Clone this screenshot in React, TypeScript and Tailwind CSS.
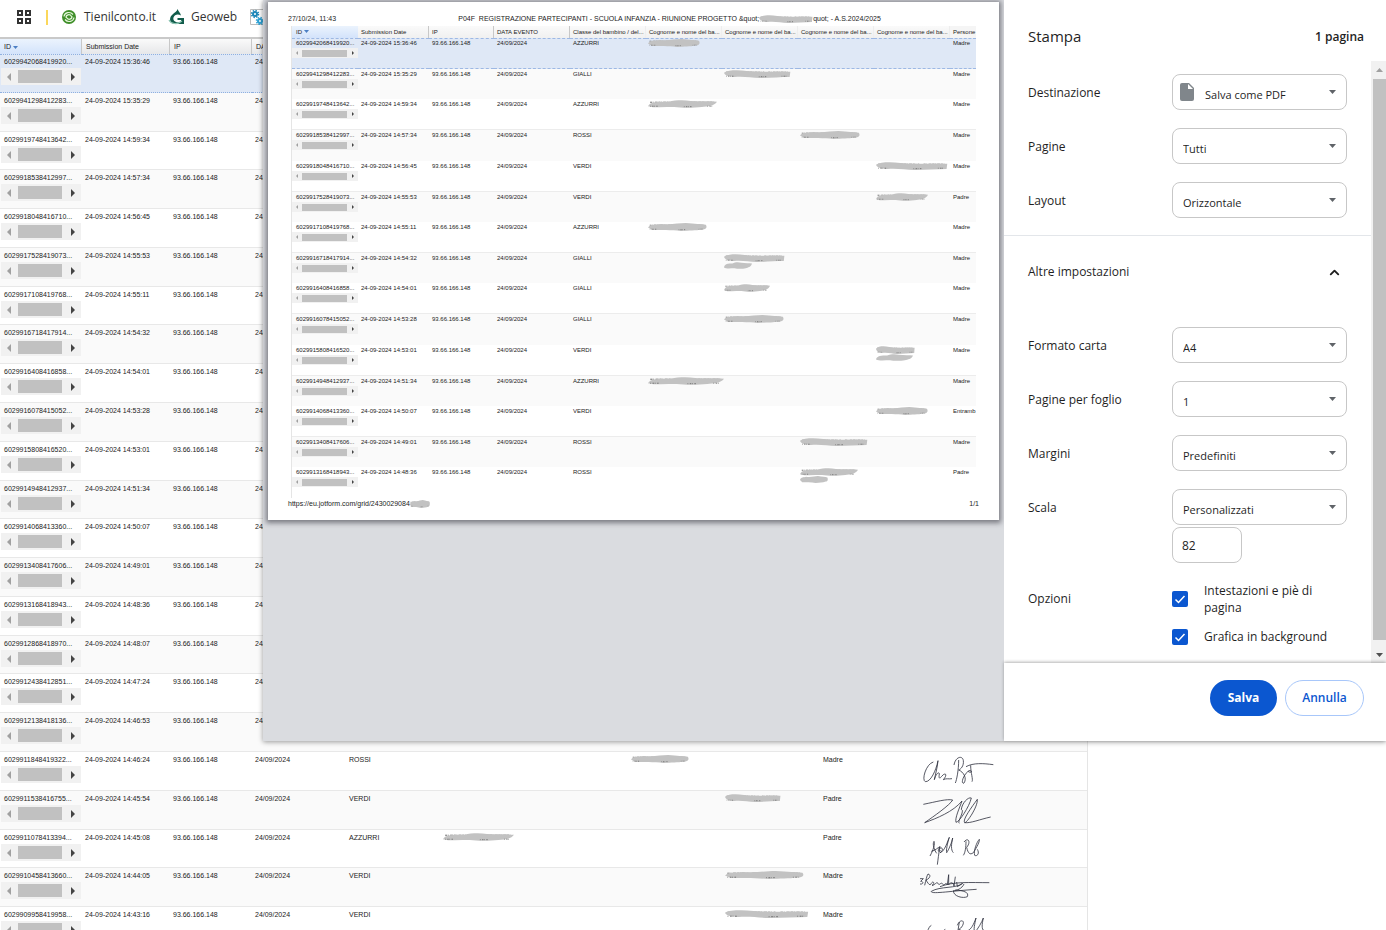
import React from 'react'
import { ChevronUp } from 'lucide-react'

type Blob = { col: number, w: number, second?: number }
type Entry = { id: string, time: string, group: string, blob?: Blob, who?: string }

const entries: Entry[] = [
    { id: '6029942068419920', time: '15:36:46', group: 'AZZURRI', blob: { col: 0, w: 52 }, who: 'Madre' },
    { id: '6029941298412283', time: '15:35:29', group: 'GIALLI', blob: { col: 1, w: 67 }, who: 'Madre' },
    { id: '6029919748413642', time: '14:59:34', group: 'AZZURRI', blob: { col: 0, w: 69 }, who: 'Madre' },
    { id: '6029918538412997', time: '14:57:34', group: 'ROSSI', blob: { col: 2, w: 60 }, who: 'Madre' },
    { id: '6029918048416710', time: '14:56:45', group: 'VERDI', blob: { col: 3, w: 72 }, who: 'Madre' },
    { id: '6029917528419073', time: '14:55:53', group: 'VERDI', blob: { col: 3, w: 52 }, who: 'Padre' },
    { id: '6029917108419768', time: '14:55:11', group: 'AZZURRI', blob: { col: 0, w: 59 }, who: 'Madre' },
    { id: '6029916718417914', time: '14:54:32', group: 'GIALLI', blob: { col: 1, w: 61, second: 28 }, who: 'Madre' },
    { id: '6029916408416858', time: '14:54:01', group: 'GIALLI', blob: { col: 1, w: 46 }, who: 'Madre' },
    { id: '6029916078415052', time: '14:53:28', group: 'GIALLI', blob: { col: 1, w: 60 }, who: 'Madre' },
    { id: '6029915808416520', time: '14:53:01', group: 'VERDI', blob: { col: 3, w: 39, second: 37 }, who: 'Madre' },
    { id: '6029914948412937', time: '14:51:34', group: 'AZZURRI', blob: { col: 0, w: 76 }, who: 'Madre' },
    { id: '6029914068413360', time: '14:50:07', group: 'VERDI', blob: { col: 3, w: 52 }, who: 'Entramb' },
    { id: '6029913408417606', time: '14:49:01', group: 'ROSSI', blob: { col: 2, w: 68 }, who: 'Madre' },
    { id: '6029913168418943', time: '14:48:36', group: 'ROSSI', blob: { col: 2, w: 58, second: 28 }, who: 'Padre' },
    { id: '6029912868418970', time: '14:48:07', group: '' },
    { id: '6029912438412851', time: '14:47:24', group: '' },
    { id: '6029912138418136', time: '14:46:53', group: '' },
    { id: '6029911848419322', time: '14:46:24', group: 'ROSSI', blob: { col: 2, w: 58 }, who: 'Madre' },
    { id: '6029911538416755', time: '14:45:54', group: 'VERDI', blob: { col: 3, w: 56 }, who: 'Padre' },
    { id: '6029911078413394', time: '14:45:08', group: 'AZZURRI', blob: { col: 0, w: 71 }, who: 'Padre' },
    { id: '6029910458413660', time: '14:44:05', group: 'VERDI', blob: { col: 3, w: 79 }, who: 'Madre' },
    { id: '6029909958419958', time: '14:43:16', group: 'VERDI', blob: { col: 3, w: 84 }, who: 'Madre' },
]

// rows before this one lie behind the print dialog
const firstOpenRow = 18

const blobShapes = [
    'M0 5 C4 1 12 2 22 1 C40 2 52 0 64 0 C80 1 90 1 98 2 C101 5 98 8 92 7 C80 9 70 8 56 9 C40 8 20 8 8 8 Z',
    'M0 3 C6 0 20 0 34 1 C48 2 60 2 76 2 C84 1 92 2 99 2 L98 8 C84 8 70 9 54 9 C40 9 30 7 16 8 C8 7 2 7 0 3 Z',
    'M0 7 C3 2 14 2 30 2 C40 0 52 0 62 1 C76 2 90 1 100 2 C96 7 86 7 78 8 C66 9 48 9 38 8 C24 8 8 9 0 7 Z',
]

const signatures: Record<number, { box: string, d: string }> = {
    18: {
        box: '951 42 510 105',
        d: 'M1000 66 C978 72 964 120 976 125 C992 126 1008 92 1014 62 C1012 84 1006 104 1003 119 C1008 100 1018 94 1018 102 C1016 114 1018 118 1024 110 L1030 104 C1040 98 1040 108 1030 119 C1040 114 1046 118 1056 116 M1076 60 C1076 90 1070 120 1066 129 M1062 75 C1066 50 1088 45 1090 62 C1092 78 1082 88 1076 90 C1090 95 1102 115 1092 129 C1084 134 1084 112 1106 92 C1120 90 1114 102 1104 94 M1112 76 C1112 100 1120 118 1116 125 M1098 80 C1120 68 1150 70 1180 74',
    },
    19: {
        box: '951 159 510 105',
        d: 'M970 193 C1010 185 1040 176 1058 180 C1050 195 1000 230 974 248 C1010 235 1060 215 1086 183 C1078 205 1064 235 1068 247 C1078 246 1108 200 1114 174 C1104 170 1086 190 1084 208 C1096 212 1070 246 1078 250 M1132 178 C1116 200 1086 240 1094 248 C1100 250 1134 200 1132 178 M1094 248 C1112 250 1140 238 1172 231',
    },
    20: {
        box: '951 276 510 105',
        d: 'M990 348 C1000 330 1006 310 1002 304 C996 312 1004 332 1010 340 M994 334 C1006 332 1014 322 1020 320 C1012 330 1014 340 1022 330 M1020 320 C1016 340 1014 360 1012 374 M1018 326 C1030 318 1030 334 1020 338 C1034 336 1044 300 1048 292 C1042 310 1038 330 1040 338 C1046 330 1056 306 1058 294 C1054 312 1052 330 1060 338 M1098 304 C1098 320 1096 338 1090 346 M1092 306 C1104 290 1114 306 1100 322 C1104 340 1110 346 1120 338 C1130 322 1140 304 1138 298 C1130 306 1120 334 1124 346 C1130 350 1140 342 1132 328',
    },
    21: {
        box: '951 390 510 105',
        d: 'M960 416 L970 416 L962 424 C972 424 970 434 960 432 M974 436 C978 420 980 408 984 402 C994 404 990 416 978 420 C984 430 990 440 994 430 C1000 420 1006 432 996 436 C1006 436 1008 424 1014 430 C1018 440 1022 424 1028 432 C1034 440 1036 424 1042 434 L1046 404 L1046 434 C1054 424 1060 428 1062 438 L1066 410 M1070 426 L1072 440 L1088 430 M1020 440 C1060 424 1110 428 1168 428 M1088 430 C1070 446 1020 438 994 454 C990 464 1060 452 1130 448 M1092 432 C1086 446 1070 452 1060 452 C1060 470 1090 476 1102 470 C1108 456 1090 452 1066 450',
    },
    22: {
        box: '951 507 510 105',
        d: 'M994 556 C986 558 974 590 986 596 C998 584 1004 576 1010 582 C1016 590 1024 574 1036 568 M1078 546 L1070 596 M1072 556 C1080 536 1096 540 1088 556 C1084 564 1080 566 1076 568 C1086 570 1094 584 1104 572 C1114 566 1120 556 1128 534 C1124 552 1120 570 1124 578 C1134 566 1146 546 1150 534 C1146 552 1144 568 1152 572',
    },
}

function Scribble({ blob, index }: { blob: Blob, index: number }) {
    return (
        <div aria-hidden="true">
            <svg className="block" width={blob.w} height="8" viewBox="0 0 100 9" preserveAspectRatio="none">
                <path d="M3 2.500 H60 M66 2.500 H95" stroke="#444" strokeWidth="1" strokeDasharray="3 1 1 2 4 1" />
                <path d={blobShapes[index % 3]} fill="#c2c2c2" />
                <path d="M3 7 H14 M52 7.500 H64 M86 7 H94" stroke="#666" strokeWidth="1" strokeDasharray="1 2 2 1" />
            </svg>
            {blob.second ? (
                <svg className="block" width={blob.second} height="7" viewBox="0 0 100 9" preserveAspectRatio="none">
                    <path d={blobShapes[(index + 1) % 3]} fill="#c2c2c2" />
                </svg>
            ) : null}
        </div>
    )
}

function SortArrow() {
    return (
        <svg className="inline-block" width="5" height="3" viewBox="0 0 5 3">
            <path d="M0 0h5L2.500 3z" fill="#4b7fc4" />
        </svg>
    )
}

function CellScroller({ small }: { small?: boolean }) {
    return (
        <div className={small ? 'flex h-[10px] items-center bg-[#f1f1f1] px-1' : 'mt-px mr-px ml-px flex h-[17px] items-center bg-[#f1f1f1] px-[6px]'}>
            <svg width={small ? 2 : 4} height={small ? 4 : 8} viewBox="0 0 4 8"><path d="M4 0v8L0 4z" fill="#a0a0a0" /></svg>
            <div className={small ? 'mx-1 h-[7px] w-[45px] bg-[#c1c1c1]' : 'mx-[7px] h-[13px] w-[44px] bg-[#c1c1c1]'} />
            <svg className="ml-auto" width={small ? 2 : 4} height={small ? 4 : 8} viewBox="0 0 4 8"><path d="M0 0v8l4-4z" fill="#444" /></svg>
        </div>
    )
}

function GridPage() {
    const head = 'h-[15px] border-r border-[#c8c8c8] bg-gradient-to-b from-[#fafafa] to-[#e6e7e9] pl-1 text-left font-normal whitespace-nowrap'
    return (
        <table className="w-[1088px] table-fixed border-separate border-spacing-0 border-r border-[#e5e5e5] text-[7px] leading-[11px] text-[#222]">
            <colgroup>
                <col className="w-[82px]" />
                <col className="w-[88px]" />
                <col className="w-[82px]" />
                <col className="w-[94px]" />
                <col className="w-[95px]" />
                <col className="w-[94px]" />
                <col className="w-[94px]" />
                <col className="w-[94px]" />
                <col className="w-[97px]" />
                <col className="w-[97px]" />
                <col />
            </colgroup>
            <thead>
                <tr>
                    <th className="h-[15px] border-r border-[#c8c8c8] bg-gradient-to-b from-[#ebf3fd] to-[#d3e3fb] pl-1 text-left font-normal">ID <SortArrow /></th>
                    <th className={head}>Submission Date</th>
                    <th className={head}>IP</th>
                    <th className={head}>DATA EVENTO</th>
                    <th className={head} colSpan={7} />
                </tr>
            </thead>
            <tbody className="align-top">
                {entries.map((e, i) => {
                    const open = i >= firstOpenRow
                    const height = i % 9 === 2 || i % 9 === 6 ? 'h-[38px]' : 'h-[39px]'
                    const tone = i === 0 ? 'border-y border-dotted border-[#8fb0e0] bg-[#dfe8f6] pt-px' : i % 2 ? 'border-b border-[#e8e8e8] bg-[#fafafa] pt-[2px]' : 'border-b border-[#e8e8e8] bg-white pt-[2px]'
                    const cell = height + ' ' + tone + ' pl-[3px]'
                    return (
                        <tr key={e.id}>
                            <td className={height + ' ' + tone}>
                                <div className="pl-1 whitespace-nowrap">{e.id}...</div>
                                <CellScroller />
                            </td>
                            <td className={cell}>24-09-2024 {e.time}</td>
                            <td className={cell}>93.66.166.148</td>
                            <td className={cell}>24/09/2024</td>
                            <td className={cell}>{open ? e.group : null}</td>
                            {[0, 1, 2, 3].map(c => (
                                <td key={c} className={height + ' ' + tone + ' pl-[2px]'}>
                                    {open && e.blob && e.blob.col === c ? <div className="pt-px"><Scribble blob={e.blob} index={i} /></div> : null}
                                </td>
                            ))}
                            <td className={cell}>{open ? e.who : null}</td>
                            <td className={height + ' ' + tone}>
                                {signatures[i] ? (
                                    <svg className="block h-[35px] w-[170px]" viewBox={signatures[i].box} preserveAspectRatio="xMinYMin meet" role="img" aria-label="Firma">
                                        <path d={signatures[i].d} fill="none" stroke="#2c2f3c" strokeWidth="2.400" />
                                    </svg>
                                ) : null}
                            </td>
                        </tr>
                    )
                })}
            </tbody>
        </table>
    )
}

function PrintSheet() {
    const head = 'h-3 border-r bg-gradient-to-b from-[#fafafa] to-[#f0f0f0] pl-[3px] text-left font-normal whitespace-nowrap'
    const names = 'Cognome e nome del ba...'
    return (
        <div className="mx-[5px] mt-[2px] bg-white px-5 pt-[11px] pb-[11px] text-[#222] shadow-[0_1px_5px_2px_rgba(70,70,80,0.65)]">
            <div className="flex h-3 items-center text-[7px] leading-[10px]">
                <span>27/10/24, 11:43</span>
                <div className="flex flex-1 items-center justify-center pl-6 whitespace-pre">
                    <span>P04F  REGISTRAZIONE PARTECIPANTI - SCUOLA INFANZIA - RIUNIONE PROGETTO &amp;quot;</span>
                    <Scribble blob={{ col: 0, w: 54 }} index={1} />
                    <span>quot; - A.S.2024/2025</span>
                </div>
            </div>
            <div className="mr-[3px] ml-[3px] border-l border-[#e5e5e5]">
                <table className="mt-px w-full table-fixed border-separate border-spacing-0 text-[6px] leading-[9px]">
                    <colgroup>
                        <col className="w-[66px]" />
                        <col className="w-[71px]" />
                        <col className="w-[65px]" />
                        <col className="w-[76px]" />
                        <col className="w-[76px]" />
                        <col className="w-[76px]" />
                        <col className="w-[76px]" />
                        <col className="w-[76px]" />
                        <col className="w-[76px]" />
                        <col />
                    </colgroup>
                    <thead>
                        <tr>
                            <th className="h-3 bg-gradient-to-b from-[#ebf3fd] to-[#d3e3fb] pl-1 text-left font-normal">ID <SortArrow /></th>
                            <th className={head + ' border-[#c8c8c8]'}>Submission Date</th>
                            <th className={head + ' border-[#c8c8c8]'}>IP</th>
                            <th className={head + ' border-[#c8c8c8]'}>DATA EVENTO</th>
                            <th className={head + ' border-[#eeeeee]'}>Classe del bambino / del...</th>
                            <th className={head + ' border-[#eeeeee]'}>{names}</th>
                            <th className={head + ' border-[#eeeeee]'}>{names}</th>
                            <th className={head + ' border-[#eeeeee]'}>{names}</th>
                            <th className={head + ' border-[#eeeeee]'}>{names}</th>
                            <th className="h-3 bg-[#f5f5f5] pl-[3px] text-left font-normal">Persone</th>
                        </tr>
                    </thead>
                    <tbody className="align-top">
                        {entries.slice(0, 15).map((e, i) => {
                            const height = i % 6 === 1 || i % 6 === 5 ? 'h-[30px]' : 'h-[31px]'
                            const tone = i === 0 ? 'border-y border-dashed border-[#9db8e4] bg-[#dfe8f6]' : i === 14 ? 'pt-px' : i % 2 ? 'border-b border-[#fafafa] bg-[#fafafa] pt-px' : 'border-b border-[#ececec] bg-white pt-px'
                            const cell = height + ' ' + tone + ' pl-[3px]'
                            return (
                                <tr key={e.id}>
                                    <td className={height + ' ' + tone}>
                                        <div className="pl-1 whitespace-nowrap">{e.id}...</div>
                                        <CellScroller small />
                                    </td>
                                    <td className={cell}>24-09-2024 {e.time}</td>
                                    <td className={cell}>93.66.166.148</td>
                                    <td className={cell}>24/09/2024</td>
                                    <td className={cell}>{e.group}</td>
                                    {[0, 1, 2, 3].map(c => (
                                        <td key={c} className={height + ' ' + tone + ' pl-[2px]'}>
                                            {e.blob && e.blob.col === c ? <Scribble blob={e.blob} index={i} /> : null}
                                        </td>
                                    ))}
                                    <td className={cell}>{e.who}</td>
                                </tr>
                            )
                        })}
                    </tbody>
                </table>
            </div>
            <div className="mt-px flex h-[10px] items-center justify-between text-[7px]">
                <span className="flex items-center">https://eu.jotform.com/grid/2430029084<Scribble blob={{ col: 0, w: 20 }} index={0} /></span>
                <span>1/1</span>
            </div>
        </div>
    )
}

function PrintSelect({ id, label, value, icon }: { id: string, label: string, value: string, icon?: boolean }) {
    return (
        <div className="flex h-9 items-center">
            <label htmlFor={id} className="w-36 pt-px">{label}</label>
            <div className="relative w-[175px]">
                <select id={id} className={(icon ? 'pl-8' : 'pl-[10px]') + ' block h-9 w-full appearance-none rounded-lg border border-[#c7c7c7] bg-white pt-[6px] text-[11px]'}>
                    <option>{value}</option>
                </select>
                {icon ? (
                    <svg className="pointer-events-none absolute top-[9px] left-2" width="14" height="18" viewBox="0 0 14 18">
                        <path d="M2 0h7l5 5v11a2 2 0 0 1-2 2H2a2 2 0 0 1-2-2V2a2 2 0 0 1 2-2z" fill="#80868b" />
                        <path d="M8 1v5h5z" fill="#fff" />
                    </svg>
                ) : null}
                <svg className="pointer-events-none absolute top-4 right-[11px]" width="7" height="4" viewBox="0 0 7 4"><path d="M0 0h7L3.500 4z" fill="#5f6368" /></svg>
            </div>
        </div>
    )
}

function PrintCheck({ id, label }: { id: string, label: string }) {
    return (
        <label htmlFor={id} className="flex items-center gap-4 leading-[17px]">
            <span className="relative h-4 w-4 shrink-0">
                <input id={id} type="checkbox" defaultChecked className="block h-4 w-4 appearance-none rounded-xs bg-[#0b57d0]" />
                <svg className="pointer-events-none absolute inset-0" width="16" height="16" viewBox="0 0 16 16" fill="none"><path d="M3.500 8.500l3 3 6-6.500" stroke="#fff" strokeWidth="1.500" /></svg>
            </span>
            <span>{label}</span>
        </label>
    )
}

function PrintSettings() {
    return (
        <form className="flex w-[382px] shrink-0 flex-col bg-white font-['Open_Sans','Noto_Sans',sans-serif] text-[12px] text-[#1f1f1f]">
            <div className="flex h-[61px] items-center justify-between pt-3 pr-[22px] pl-6">
                <h1 className="text-[15px]">Stampa</h1>
                <span className="font-semibold">1 pagina</span>
            </div>
            <div className="flex flex-1">
                <div className="flex-1 pb-[18px]">
                    <div className="flex flex-col gap-[18px] border-b border-[#e3e6ea] pt-[13px] pb-[17px] pl-6">
                        <PrintSelect id="dest" label="Destinazione" value="Salva come PDF" icon />
                        <PrintSelect id="pages" label="Pagine" value="Tutti" />
                        <PrintSelect id="layout" label="Layout" value="Orizzontale" />
                    </div>
                    <button type="button" className="flex h-[72px] w-full items-center justify-between pr-[29px] pl-6">
                        <span>Altre impostazioni</span>
                        <ChevronUp size={15} strokeWidth={3} />
                    </button>
                    <div className="flex flex-col gap-[18px] pt-[19px] pl-6">
                        <PrintSelect id="paper" label="Formato carta" value="A4" />
                        <PrintSelect id="sheets" label="Pagine per foglio" value="1" />
                        <PrintSelect id="margins" label="Margini" value="Predefiniti" />
                        <div>
                            <PrintSelect id="scale" label="Scala" value="Personalizzati" />
                            <input aria-label="Percentuale di scala" defaultValue="82" className="mt-[2px] ml-36 block h-9 w-[70px] rounded-lg border border-[#c7c7c7] bg-white px-[9px]" />
                        </div>
                    </div>
                    <div role="group" aria-labelledby="options" className="flex pt-[19px] pl-6">
                        <span id="options" className="flex h-[34px] w-36 shrink-0 items-center">Opzioni</span>
                        <div className="flex w-[165px] flex-col gap-3">
                            <PrintCheck id="headers" label="Intestazioni e piè di pagina" />
                            <PrintCheck id="graphics" label="Grafica in background" />
                        </div>
                    </div>
                </div>
                <div className="flex w-[15px] flex-col items-center bg-[#f1f1f1] pl-[2px]">
                    <svg className="my-[7px]" width="7" height="4" viewBox="0 0 7 4"><path d="M0 4h7L3.500 0z" fill="#a0a0a0" /></svg>
                    <div className="w-full flex-1 bg-[#c1c1c1]" />
                    <svg className="mt-[13px] mb-[6px]" width="7" height="4" viewBox="0 0 7 4"><path d="M0 0h7L3.500 4z" fill="#505050" /></svg>
                </div>
            </div>
            <div className="flex h-[78px] items-start justify-end gap-2 pt-[17px] pr-[22px] shadow-[0_-1px_3px_rgba(0,0,0,0.3)]">
                <button type="submit" className="h-9 w-[67px] rounded-full bg-[#0b57d0] font-bold text-white">Salva</button>
                <button type="button" className="h-9 w-[79px] rounded-full border border-[#a8c7fa] font-semibold text-[#0b57d0]">Annulla</button>
            </div>
        </form>
    )
}

function BookmarksBar() {
    return (
        <nav className="flex h-[39px] items-center border-b-2 border-[#c9c9c9] pb-[3px] pl-[17px] font-['Open_Sans','Noto_Sans',sans-serif] text-[12px] text-[#333]">
            <svg width="14" height="14" viewBox="0 0 14 14" fill="none" stroke="#333" strokeWidth="2">
                <path d="M1 1h4v4h-4zM9 1h4v4h-4zM1 9h4v4h-4zM9 9h4v4h-4z" />
            </svg>
            <div className="mr-[14px] ml-[15px] h-[15px] w-[2px] bg-[#fbd75b]" />
            <a href="#tienilconto" className="flex items-center gap-2">
                <svg width="14" height="14" viewBox="0 0 14 14" fill="none">
                    <circle cx="7" cy="7" r="7" fill="#3f8f29" />
                    <path d="M2 6.500C2.500 2.500 8 1 11 4.500M12 7.500C11.500 11.500 6 13 3 9.500" stroke="#e4f5da" strokeWidth="1.200" />
                    <path d="M4.200 8C3.500 4.500 8 3.500 9.500 6.500M9.800 6C10.500 9.500 6 10.500 4.500 7.500" stroke="#e4f5da" strokeWidth="1.200" />
                </svg>
                Tienilconto.it
            </a>
            <a href="#geoweb" className="ml-3 flex items-center gap-[6px]">
                <svg width="17" height="16" viewBox="0 0 17 16" fill="none">
                    <path d="M9.500 0C9 2.500 6.500 3.500 4 6C0.500 9.500 2 14.500 6.500 15H16V9H9.500V11H13V13C8 14 4.500 12 5.500 8.500C6.500 5.500 10 4.500 13 6.500C12.500 3.500 10.500 3 9.500 0z" fill="#125c4b" />
                    <path d="M1 11c2 4 8 5 13 1" stroke="#8cc4b2" strokeWidth="1.200" />
                </svg>
                Geoweb
            </a>
            <svg className="ml-[13px]" width="16" height="16" viewBox="0 0 16 16" fill="none">
                <path d="M.5.5h15v15h-15z" fill="#fff" stroke="#bcbcbc" />
                <circle cx="5" cy="5" r="2" stroke="#1d86b8" strokeWidth="2" />
                <circle cx="5" cy="5" r="3.500" stroke="#1d86b8" strokeWidth="1.500" strokeDasharray="1.400 1.350" />
                <circle cx="10" cy="12" r="2" stroke="#2fa3d6" strokeWidth="2" />
                <circle cx="10" cy="12" r="3.500" stroke="#2fa3d6" strokeWidth="1.500" strokeDasharray="1.400 1.350" />
            </svg>
        </nav>
    )
}

export default function App() {
    return (
        <div className="relative h-screen overflow-hidden bg-white font-['Liberation_Sans',Arial,sans-serif]">
            <BookmarksBar />
            <GridPage />
            <div role="dialog" aria-label="Stampa" className="absolute top-0 right-0 left-[263px] flex bg-white shadow-[0_1px_5px_rgba(0,0,0,0.4)]">
                <div className="min-w-0 flex-1 bg-[#dadce0]">
                    <PrintSheet />
                </div>
                <PrintSettings />
            </div>
        </div>
    )
}
